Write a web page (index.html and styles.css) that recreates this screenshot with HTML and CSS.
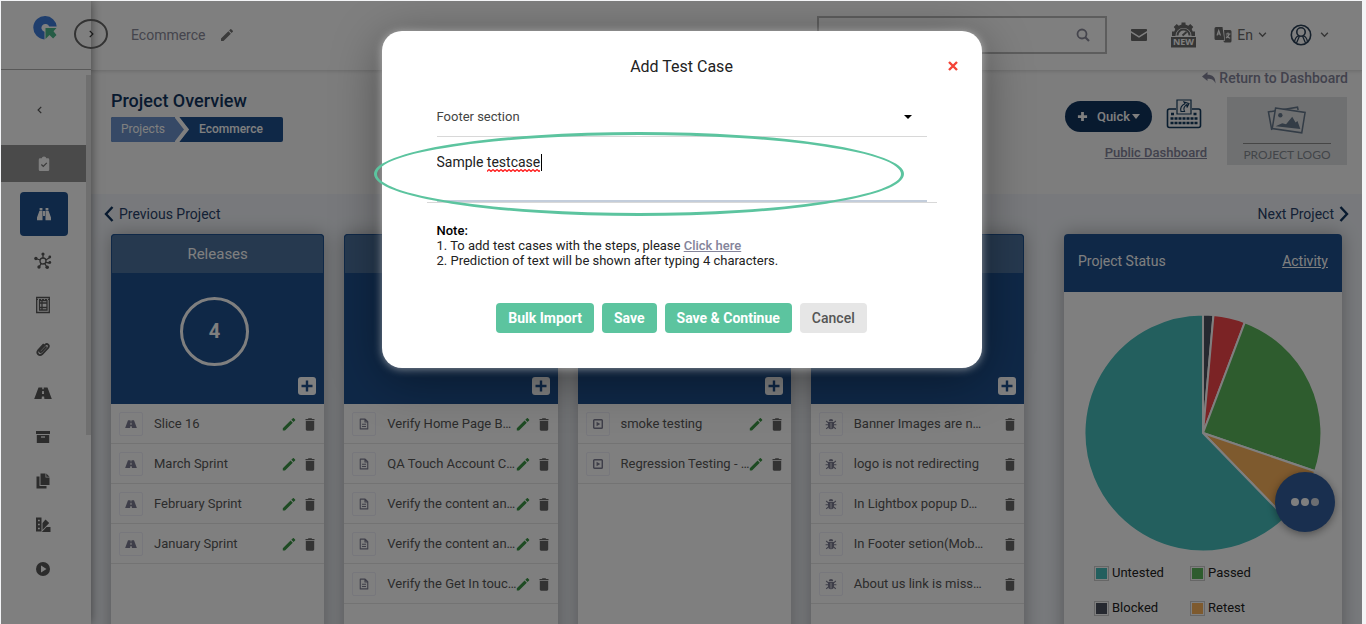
FILE: index.html
```html
<!DOCTYPE html>
<html lang="en">
<head>
    <meta charset="UTF-8">
    <meta name="viewport" content="width=device-width, initial-scale=1">
    <title>Project Overview</title>
    <link rel="stylesheet" href="styles.css">
</head>
<body>
    <!-- Icon set -->
    <svg class="icon-set" aria-hidden="true">
        <symbol id="i-left" viewBox="0 0 16 16"><path d="M10 3L5 8l5 5" fill="none" stroke="currentColor" stroke-width="2"/></symbol>
        <symbol id="i-right" viewBox="0 0 16 16"><path d="M6 3l5 5-5 5" fill="none" stroke="currentColor" stroke-width="2"/></symbol>
        <symbol id="i-down" viewBox="0 0 16 16"><path d="M2 5l6 6 6-6" fill="none" stroke="currentColor" stroke-width="2.5"/></symbol>
        <symbol id="i-edit" viewBox="0 0 24 24"><path d="M3 17.25V21h3.75L17.81 9.94l-3.75-3.75L3 17.25zM20.71 7.04a1 1 0 0 0 0-1.41l-2.34-2.34a1 1 0 0 0-1.41 0l-1.83 1.83 3.75 3.75 1.83-1.83z" fill="currentColor"/></symbol>
        <symbol id="i-pencil" viewBox="0 0 14 14"><path d="M.8 11.200V13.500H3L10.800 5.700 8.600 3.500zM9.300 2.800l2.200 2.200 1.600-1.600c.3-.3.3-.6 0-.9L11.800 1.200c-.3-.3-.6-.3-.9 0z" fill="currentColor"/></symbol>
        <symbol id="i-trash" viewBox="0 0 12 14"><path d="M1.500 2h2.300L4.500 1.200h3l.7.8h2.300V3.300h-9zM1.800 4.100h8.400v8.200c0 .9-.4 1.400-1.300 1.400H3.100c-.9 0-1.300-.5-1.300-1.400z" fill="currentColor"/></symbol>
        <symbol id="i-road" viewBox="0 0 18 14"><path d="M4.500 1.500h3.800v1.800h1.400V1.500h3.800L17.800 13h-7.400l-.3-2.500H7.900L7.600 13H.2zM8.200 5l-.2 3h2l-.2-3z" fill="currentColor" fill-rule="evenodd"/></symbol>
        <symbol id="i-doc" viewBox="0 0 14 16"><path d="M2 1.500h6.500L12 5v9.500H2zM8.300 1.700V5.300H12M4.300 8.300h5.400M4.300 11.300h5.400" fill="none" stroke="currentColor" stroke-width="1.500" stroke-linejoin="round"/></symbol>
        <symbol id="i-run" viewBox="0 0 14 14"><rect x="2" y="2" width="10" height="10" rx="1" fill="none" stroke="currentColor" stroke-width="1.700"/><path d="M5.300 4.300v5.400L9.700 7z" fill="currentColor"/></symbol>
        <symbol id="i-bug" viewBox="0 0 16 16"><path d="M5 4.300a3 3 0 0 1 6 0zM4 5.200h8V11a4 4 0 0 1-8 0z" fill="currentColor"/><path d="M1.500 4l3 2.500M14.500 4l-3 2.500M.8 9h3.500M15.200 9h-3.500M1.500 14.500L4.500 12M14.500 14.500l-3-2.500" stroke="currentColor" stroke-width="1.400"/><path d="M8 6.500V14" stroke="#fff" stroke-width="1"/></symbol>
        <symbol id="i-add" viewBox="0 0 18 18"><rect width="18" height="18" rx="3" fill="#fff"/><path d="M9 3.500v11M3.500 9h11" stroke="#1e508e" stroke-width="2.400"/></symbol>
    </svg>

    <div class="app">
        <nav class="sidebar">
            <div class="brand">
                <svg class="brand-logo" viewBox="0 0 26 26"><path d="M12.500 1a11.700 11.700 0 0 1 11.200 10.500h-7.500a4 4 0 1 0-4.700 5.300V24.400A11.700 11.700 0 0 1 12.500 1z" fill="#3f7ddb"/><path d="M12.500 13h11l-3 3.200 3 3.800-3.400 3.400-3.600-3.500-4 4.100z" fill="#4cb88c"/></svg>
            </div>
            <a class="side-back" href="#" aria-label="Back"><svg><use href="#i-left"/></svg></a>
            <a class="side-head" href="#" aria-label="Project">
                <svg viewBox="0 0 16 18"><path d="M3.500 2.500h2a2.500 2 0 0 1 5 0h2A1.500 1.500 0 0 1 14 4v11.500a1.500 1.500 0 0 1-1.500 1.500h-9A1.500 1.500 0 0 1 2 15.500V4a1.500 1.500 0 0 1 1.500-1.500z" fill="#fff"/><path d="M5 9.500l2.200 2.200 4-4" fill="none" stroke="#777" stroke-width="1.500"/></svg>
            </a>
            <a class="side-active" href="#" aria-label="Overview">
                <svg viewBox="0 0 18 16"><path d="M4 1h3.200v3H4zM10.800 1H14v3h-3.200zM3.700 4.700h3.600V15H1v-3zM10.700 4.700h3.600L17 12v3h-6.300zM7.900 4.700h2.200v5.500H7.900z" fill="#fff"/></svg>
            </a>
            <a class="side-link" href="#" aria-label="Modules"><svg viewBox="0 0 18 18"><g fill="none" stroke="currentColor" stroke-width="1.300"><circle cx="9" cy="9" r="3"/><path d="M9 6V2M6.300 8L1.500 6.500M11.800 8l4-2.500M11.800 10.300l3.500.7M7.300 11.500L5 15M10.800 11.500l2 3.500"/></g><g fill="currentColor"><circle cx="9" cy="2" r="1.600"/><circle cx="1.900" cy="6.500" r="1.700"/><circle cx="15.800" cy="5" r="1.400"/><circle cx="15.800" cy="10.500" r="1.400"/><circle cx="5" cy="15" r="1.700"/><circle cx="13.200" cy="15.300" r="1.800"/></g></svg></a>
            <a class="side-link" href="#" aria-label="Plans"><svg viewBox="0 0 18 18"><path d="M2.700 1.500h12.600v15H2.700zM5.500 4.500h7.500v9.500H5.500zM8 4.500v9.500M5.500 7H13M5.500 11.500H13" fill="none" stroke="currentColor" stroke-width="1.300"/><path d="M2 3.500h14" stroke="currentColor" stroke-width="1" stroke-dasharray="2 1"/></svg></a>
            <a class="side-link" href="#" aria-label="Attachments"><svg viewBox="0 0 18 18"><path d="M12.500 6.500l-4.800 5.200c-1.200 1.200-2.700-.3-1.600-1.500l5-5.300c2.200-2.100 5 .6 3 2.900l-5.800 6.200c-3 2.800-6.600-.8-4-3.900L9.800 4" fill="none" stroke="currentColor" stroke-width="1.800"/></svg></a>
            <a class="side-link" href="#" aria-label="Releases"><svg><use href="#i-road"/></svg></a>
            <a class="side-link" href="#" aria-label="Archive"><svg viewBox="0 0 18 18"><path d="M2 3h14v3H2zM2.800 7h12.400v8H2.800z" fill="currentColor"/><path d="M7 9h4" stroke="#fff" stroke-width="1.300"/></svg></a>
            <a class="side-link" href="#" aria-label="Documents"><svg viewBox="0 0 18 18"><path d="M6.500 1.500h5v4h4V13h-9zM12.300 1.500l3.200 3.200h-3.200zM2.500 4.500H5.500v9.500H12.500v2.500h-10z" fill="currentColor"/></svg></a>
            <a class="side-link" href="#" aria-label="Reports"><svg viewBox="0 0 18 18"><path d="M2 1.500h5.500v14H2zM8.500 7l3-3.500L15.200 7 8.500 14zM12.500 11h4v5H7.800z" fill="currentColor"/><path d="M4 4.500h1.800M4 8.500h1.800M4 12.500h1.800" stroke="#fff" stroke-width="1.500"/></svg></a>
            <a class="side-link" href="#" aria-label="Runs"><svg viewBox="0 0 18 18"><circle cx="9" cy="9" r="7" fill="currentColor"/><path d="M7 5.500v7L12.500 9z" fill="#fff"/></svg></a>
        </nav>
        <button class="side-toggle" type="button" aria-label="Expand menu"><svg><use href="#i-right"/></svg></button>

        <main class="main">
            <header class="topbar">
                <span class="project-name">Ecommerce</span>
                <svg class="edit-project"><use href="#i-edit"/></svg>
                <div class="search">
                    <input type="text" aria-label="Search">
                    <svg viewBox="0 0 16 16"><circle cx="7" cy="7" r="4.500" fill="none" stroke="currentColor" stroke-width="1.800"/><path d="M10 10l4 4" stroke="currentColor" stroke-width="2.200"/></svg>
                </div>
                <svg class="mail" viewBox="0 0 16 14"><path d="M0 3V1.500Q0 1 1 1h14q1 0 1 .5V3L8 8zM0 4.800l8 5 8-5V12q0 1-1 1H1q-1 0-1-1z" fill="currentColor"/></svg>
                <svg class="whats-new" viewBox="0 0 25 26">
                    <path d="M10.500 2.500V.5h4v2l2.800 1.200 2-1.700 3 3-1.600 2 1 2.500H24V14h-3.500a8 8 0 0 0-16 0H1V9.500h2.300l1-2.500-1.600-2 3-3 2 1.700z" fill="currentColor"/>
                    <path d="M6.500 13.500a6 6 0 0 1 12 0M11.500 13.500l4-3.500" fill="none" stroke="currentColor" stroke-width="2"/>
                    <path d="M0 15h25v10.500H0z" fill="currentColor"/>
                    <text x="12.500" y="23.300" text-anchor="middle" class="new-text">NEW</text>
                </svg>
                <button class="lang" type="button">
                    <svg class="translate" viewBox="0 0 18 18"><path d="M2 1h6.500l1.800 13H2Q.5 14 .5 12.500v-10Q.5 1 2 1zM10 4h6q1.500 0 1.500 1.500V15q0 1.500-1.500 1.500h-5.500l-1.500-1.800h2z" fill="currentColor"/><path d="M3 9.500l1.700-5 1.800 5M3.500 8h2.500M11.800 8h4.700M14 6.500V8M15.300 8c-.5 2-1.500 3-3.300 4M12.500 9.500c.8 1.500 2 2.300 3.700 2.800" fill="none" stroke="#fff" stroke-width="1.100"/></svg>
                    En
                    <svg class="caret"><use href="#i-down"/></svg>
                </button>
                <button class="account" type="button" aria-label="Account">
                    <svg class="avatar" viewBox="0 0 22 22"><g fill="none" stroke="currentColor" stroke-width="1.600"><circle cx="11" cy="11" r="9.700"/><circle cx="11" cy="8" r="4.200"/><path d="M4.500 18c.3-3.500 2-5.500 4.500-6.500M17.500 18c-.3-3.500-2-5.500-4.500-6.500M6.500 19l3-7M15.500 19l-3-7" stroke-width="1.300"/></g></svg>
                    <svg class="caret"><use href="#i-down"/></svg>
                </button>
            </header>

            <section class="overview">
                <div class="heading">
                    <h1>Project Overview</h1>
                    <div class="crumbs">
                        <a class="crumb" href="#">Projects</a>
                        <svg viewBox="0 0 18 25"><path d="M0 0h4l10 12.500L4 25H0z" fill="#6c93cc"/><path d="M1 -1l10.500 13.500L1 26" fill="none" stroke="#fff" stroke-width="4"/></svg>
                        <span class="crumb-now">Ecommerce</span>
                    </div>
                </div>
                <div class="tools">
                    <a class="return" href="#"><svg viewBox="0 0 14 12"><path d="M0 4.500L5.500 0v2.800C10.500 2.800 13.500 5 13.500 11.500 12 8 10 6.700 5.500 6.700V9z" fill="currentColor"/></svg>Return to Dashboard</a>
                    <div class="tools-row">
                        <div class="actions">
                            <div class="actions-row">
                                <button class="quick" type="button">
                                    <svg viewBox="0 0 12 12"><path d="M6 1v10M1 6h10" stroke="#fff" stroke-width="3"/></svg>Quick<span class="tri"></span>
                                </button>
                                <svg class="keyboard" viewBox="0 0 36 30"><g fill="none" stroke="#123a5e" stroke-width="1.600"><path d="M10 10H3.500Q1.500 10 1.500 12v14.500q0 2 2 2h29q2 0 2-2V12q0-2-2-2H26"/><path d="M11 1h14v14H11z" stroke-width="1.200"/><path d="M15 12.500h3.500c-1.500-3-.8-5 2.500-7V8.500l2-4-5-1.500 1 1.700c-4 1.800-5 4.500-4 7.800z" stroke-width="1.100"/></g><path d="M5 15h3.500M27.500 15H31M4.500 19.500h27M4.500 24h27" stroke="#123a5e" stroke-width="2.600" stroke-dasharray="3 1"/></svg>
                            </div>
                            <a class="public" href="#">Public Dashboard</a>
                        </div>
                        <div class="logo-box">
                            <svg viewBox="0 0 42 30"><g fill="none" stroke="#66788c" stroke-width="1.600"><path d="M5 25.500L1.500 6.500 32 1.500l.7 3"/><path d="M9 2.500l31 4.500-3.500 21.500L5.500 24z" fill="#dfe1e3"/></g><circle cx="14" cy="10" r="2.300" fill="#66788c"/><path d="M9 21.500l7-3 4 1 6.500-8 3.500 6 2-1.500 3 8.500z" fill="#66788c"/></svg>
                            <span>PROJECT LOGO</span>
                        </div>
                    </div>
                </div>
            </section>

            <div class="pager">
                <a href="#"><svg viewBox="0 0 10 16"><path d="M8.500 1L2 8l6.500 7" fill="none" stroke="currentColor" stroke-width="2.400"/></svg>Previous Project</a>
                <a href="#">Next Project<svg viewBox="0 0 10 16"><path d="M1.500 1L8 8l-6.500 7" fill="none" stroke="currentColor" stroke-width="2.400"/></svg></a>
            </div>

            <div class="board">
                <div class="cards">
                    <section class="card">
                        <div class="card-head">
                            <h2>Releases</h2>
                            <span class="count">4</span>
                            <button class="add" type="button" aria-label="Add release"><svg><use href="#i-add"/></svg></button>
                        </div>
                        <ul>
                            <li><span class="tag"><svg><use href="#i-road"/></svg></span><span class="name">Slice 16</span><svg class="pencil"><use href="#i-pencil"/></svg><svg class="trash"><use href="#i-trash"/></svg></li>
                            <li><span class="tag"><svg><use href="#i-road"/></svg></span><span class="name">March Sprint</span><svg class="pencil"><use href="#i-pencil"/></svg><svg class="trash"><use href="#i-trash"/></svg></li>
                            <li><span class="tag"><svg><use href="#i-road"/></svg></span><span class="name">February Sprint</span><svg class="pencil"><use href="#i-pencil"/></svg><svg class="trash"><use href="#i-trash"/></svg></li>
                            <li><span class="tag"><svg><use href="#i-road"/></svg></span><span class="name">January Sprint</span><svg class="pencil"><use href="#i-pencil"/></svg><svg class="trash"><use href="#i-trash"/></svg></li>
                        </ul>
                    </section>
                    <section class="card">
                        <div class="card-head">
                            <h2></h2>
                            <button class="add" type="button" aria-label="Add test case"><svg><use href="#i-add"/></svg></button>
                        </div>
                        <ul>
                            <li><span class="tag"><svg><use href="#i-doc"/></svg></span><span class="name">Verify Home Page B…</span><svg class="pencil"><use href="#i-pencil"/></svg><svg class="trash"><use href="#i-trash"/></svg></li>
                            <li><span class="tag"><svg><use href="#i-doc"/></svg></span><span class="name">QA Touch Account C…</span><svg class="pencil"><use href="#i-pencil"/></svg><svg class="trash"><use href="#i-trash"/></svg></li>
                            <li><span class="tag"><svg><use href="#i-doc"/></svg></span><span class="name">Verify the content an…</span><svg class="pencil"><use href="#i-pencil"/></svg><svg class="trash"><use href="#i-trash"/></svg></li>
                            <li><span class="tag"><svg><use href="#i-doc"/></svg></span><span class="name">Verify the content an…</span><svg class="pencil"><use href="#i-pencil"/></svg><svg class="trash"><use href="#i-trash"/></svg></li>
                            <li><span class="tag"><svg><use href="#i-doc"/></svg></span><span class="name">Verify the Get In touc…</span><svg class="pencil"><use href="#i-pencil"/></svg><svg class="trash"><use href="#i-trash"/></svg></li>
                        </ul>
                    </section>
                    <section class="card">
                        <div class="card-head">
                            <h2></h2>
                            <button class="add" type="button" aria-label="Add test run"><svg><use href="#i-add"/></svg></button>
                        </div>
                        <ul>
                            <li><span class="tag"><svg><use href="#i-run"/></svg></span><span class="name">smoke testing</span><svg class="pencil"><use href="#i-pencil"/></svg><svg class="trash"><use href="#i-trash"/></svg></li>
                            <li><span class="tag"><svg><use href="#i-run"/></svg></span><span class="name">Regression Testing - …</span><svg class="pencil"><use href="#i-pencil"/></svg><svg class="trash"><use href="#i-trash"/></svg></li>
                        </ul>
                    </section>
                    <section class="card">
                        <div class="card-head">
                            <h2></h2>
                            <button class="add" type="button" aria-label="Add issue"><svg><use href="#i-add"/></svg></button>
                        </div>
                        <ul>
                            <li><span class="tag"><svg><use href="#i-bug"/></svg></span><span class="name">Banner Images are n…</span><svg class="trash"><use href="#i-trash"/></svg></li>
                            <li><span class="tag"><svg><use href="#i-bug"/></svg></span><span class="name">logo is not redirecting</span><svg class="trash"><use href="#i-trash"/></svg></li>
                            <li><span class="tag"><svg><use href="#i-bug"/></svg></span><span class="name">In Lightbox popup D…</span><svg class="trash"><use href="#i-trash"/></svg></li>
                            <li><span class="tag"><svg><use href="#i-bug"/></svg></span><span class="name">In Footer setion(Mob…</span><svg class="trash"><use href="#i-trash"/></svg></li>
                            <li><span class="tag"><svg><use href="#i-bug"/></svg></span><span class="name">About us link is miss…</span><svg class="trash"><use href="#i-trash"/></svg></li>
                        </ul>
                    </section>
                </div>

                <section class="card status">
                    <div class="status-head">
                        <span>Project Status</span>
                        <a href="#">Activity</a>
                    </div>
                    <svg class="pie" viewBox="0 0 240 240">
                        <g stroke="#fff" stroke-width="2">
                            <path d="M120 120V2.500A117.500 117.500 0 0 1 130.400 3z" fill="#4d5360"/>
                            <path d="M120 120L130.400 3A117.500 117.500 0 0 1 161.500 10.100z" fill="#f7464a"/>
                            <path d="M120 120L161.500 10.100A117.500 117.500 0 0 1 231.200 157.900z" fill="#5cb85c"/>
                            <path d="M120 120L231.200 157.900A117.500 117.500 0 0 1 201.900 204.200z" fill="#fdb45c"/>
                            <path d="M120 120L201.900 204.200A117.500 117.500 0 1 1 120 2.500z" fill="#46bfbd"/>
                        </g>
                    </svg>
                    <div class="legend">
                        <span><i class="untested"></i>Untested</span>
                        <span><i class="passed"></i>Passed</span>
                        <span><i class="blocked"></i>Blocked</span>
                        <span><i class="retest"></i>Retest</span>
                    </div>
                </section>
            </div>
        </main>

        <button class="chat" type="button" aria-label="Chat"><i></i><i></i><i></i></button>

        <!-- Add test case popup -->
        <div class="backdrop">
            <form class="modal">
                <button class="close" type="button" aria-label="Close"><svg viewBox="0 0 10 10"><path d="M1 1l8 8M9 1L1 9" stroke="#f44336" stroke-width="2.400"/></svg></button>
                <h3>Add Test Case</h3>
                <select class="module" aria-label="Section">
                    <option>Footer section</option>
                </select>
                <div class="case">
                    <input type="text" aria-label="Test case" value="Sample testcase">
                    <svg class="spelling" viewBox="0 0 53 3"><path d="M0 2.500l2-2 2 2 2-2 2 2 2-2 2 2 2-2 2 2 2-2 2 2 2-2 2 2 2-2 2 2 2-2 2 2 2-2 2 2 2-2 2 2 2-2 2 2 2-2 2 2 2-2 2 2 1-1" fill="none" stroke="#f22" stroke-width="1.300"/></svg>
                    <span class="cursor"></span>
                </div>
                <div class="note">
                    <strong>Note:</strong>
                    <p>1. To add test cases with the steps, please <a href="#">Click here</a></p>
                    <p>2. Prediction of text will be shown after typing 4 characters.</p>
                </div>
                <div class="buttons">
                    <button type="button">Bulk Import</button>
                    <button type="button">Save</button>
                    <button type="button">Save &amp; Continue</button>
                    <button class="cancel" type="button">Cancel</button>
                </div>
                <span class="highlight"></span>
            </form>
        </div>
    </div>
</body>
</html>
```
FILE: styles.css
```css
* {
    box-sizing: border-box;
}
body {
    margin: 0;
    padding: 1px 4px 0 1px;
    height: 100vh;
    overflow: hidden;
    background-color: #f3f4f6;
    font-family: Roboto, "Liberation Sans", sans-serif;
    font-size: 13px;
    color: #333;
}
h1, h2, h3, p, ul {
    margin: 0;
    padding: 0;
}
a {
    color: inherit;
    text-decoration: none;
}
button {
    border: 0;
    background: none;
    padding: 0;
    font: inherit;
    color: inherit;
}
svg {
    display: block;
    flex: none;
}
.icon-set {
    position: absolute;
    width: 0;
    height: 0;
}
.app {
    position: relative;
    display: flex;
    height: 100%;
    overflow: hidden;
    background-color: #fafafa;
}

/* Sidebar */
.sidebar {
    position: relative;
    z-index: 2;
    width: 90px;
    flex: none;
    display: flex;
    flex-direction: column;
    background-color: #fff;
    box-shadow: 0 0 10px rgba(0, 0, 0, 0.5);
    color: #585858;
}
.sidebar::after {
    content: "";
    position: absolute;
    top: 74px;
    right: 0;
    width: 5px;
    height: 360px;
    background-color: #dedede;
}
.brand {
    height: 69px;
    padding: 14px 32px;
    border-bottom: 1px solid #b0b0b0;
}
.brand-logo {
    width: 26px;
    height: 26px;
}
.side-back {
    height: 75px;
    margin-right: 13px;
    padding-top: 4px;
    display: flex;
    align-items: center;
    justify-content: center;
}
.side-back svg {
    width: 10px;
    height: 10px;
}
.side-head {
    height: 37px;
    margin-right: 5px;
    display: flex;
    align-items: center;
    justify-content: center;
    background-color: #949494;
}
.side-head svg {
    width: 14px;
    height: 16px;
}
.side-active {
    width: 48px;
    height: 44px;
    margin: 10px 19px 3px;
    flex: none;
    display: flex;
    align-items: center;
    justify-content: center;
    border-radius: 4px;
    background-color: #1e508e;
}
.side-active svg {
    width: 16px;
    height: 14px;
}
.side-link {
    height: 44px;
    flex: none;
    margin-right: 6px;
    display: flex;
    align-items: center;
    justify-content: center;
}
.side-link svg {
    width: 18px;
    height: 18px;
}
.side-toggle {
    position: absolute;
    z-index: 3;
    top: 18px;
    left: 73px;
    width: 34px;
    height: 30px;
    display: flex;
    align-items: center;
    justify-content: center;
    border: 2px solid #666;
    border-radius: 50%;
}
.side-toggle svg {
    width: 10px;
    height: 10px;
}

/* Top bar */
.main {
    flex: 1;
    min-width: 0;
    display: flex;
    flex-direction: column;
}
.topbar {
    height: 70px;
    flex: none;
    display: flex;
    align-items: center;
    padding: 0 33px 2px 40px;
    background-color: #fff;
    border-bottom: 1px solid #e2e2e2;
    box-shadow: 0 1px 3px rgba(0, 0, 0, 0.1);
    color: #6c6c6c;
}
.project-name {
    font-size: 14px;
    color: #8a8a9a;
}
.edit-project {
    width: 16px;
    height: 16px;
    margin-left: 14px;
    color: #777;
}
.search {
    width: 290px;
    height: 38px;
    margin-left: auto;
    display: flex;
    align-items: center;
    padding-right: 14px;
    border: 2px solid #bbb;
    color: #8a8a9a;
}
.search input {
    flex: 1;
    min-width: 0;
    border: 0;
    outline: 0;
    background: none;
}
.search svg {
    width: 16px;
    height: 16px;
}
.mail {
    width: 16px;
    height: 14px;
    margin-left: 24px;
}
.whats-new {
    width: 25px;
    height: 26px;
    margin-left: 24px;
}
.new-text {
    font-family: "Open Sans", sans-serif;
    font-size: 9px;
    font-weight: bold;
    fill: #fff;
}
.lang {
    display: flex;
    align-items: center;
    gap: 5px;
    margin-left: 18px;
    font-size: 14px;
}
.translate {
    width: 18px;
    height: 18px;
}
.caret {
    width: 9px;
    height: 9px;
}
.account {
    display: flex;
    align-items: center;
    gap: 8px;
    margin-left: 23px;
}
.avatar {
    width: 22px;
    height: 22px;
    color: #2b4057;
}

/* Overview heading */
.overview {
    height: 123px;
    flex: none;
    display: flex;
    justify-content: space-between;
    padding: 0 14px 0 20px;
}
.heading {
    padding-top: 20px;
}
.heading h1 {
    font-size: 18px;
    line-height: 20px;
    font-weight: 500;
    color: #10345f;
}
.crumbs {
    display: flex;
    width: fit-content;
    height: 25px;
    margin-top: 6px;
    font-size: 12px;
    line-height: 24px;
    border-radius: 2px;
    overflow: hidden;
    background-color: #1e508e;
    color: #fff;
}
.crumb {
    padding: 0 10px;
    background-color: #6c93cc;
}
.crumbs svg {
    width: 18px;
    height: 25px;
}
.crumb-now {
    padding: 0 20px 0 6px;
    font-weight: 500;
}
.tools {
    display: flex;
    flex-direction: column;
    align-items: flex-end;
}
.return {
    display: flex;
    align-items: center;
    gap: 3px;
    font-size: 14px;
    line-height: 14px;
    font-weight: 500;
    color: #84849a;
}
.return svg {
    width: 14px;
    height: 12px;
}
.tools-row {
    display: flex;
    gap: 20px;
    margin: 12px 1px 0 0;
}
.actions {
    text-align: right;
}
.actions-row {
    display: flex;
    gap: 14px;
    padding-right: 5px;
}
.quick {
    display: flex;
    align-items: center;
    height: 31px;
    margin-top: 4px;
    padding: 0 12px;
    border-radius: 16px;
    background-color: #10345f;
    color: #fff;
    font-weight: 500;
}
.quick svg {
    width: 11px;
    height: 11px;
    margin-right: 9px;
}
.tri {
    margin-left: 2px;
    border: 4px solid transparent;
    border-top: 5px solid #fff;
    border-bottom: 0;
}
.keyboard {
    width: 36px;
    height: 30px;
    margin-top: 2px;
}
.public {
    display: block;
    margin-top: 13px;
    font-weight: 500;
    color: #84849a;
    text-decoration: underline;
}
.logo-box {
    width: 120px;
    height: 68px;
    display: flex;
    flex-direction: column;
    align-items: center;
    padding-top: 8px;
    background-color: #dfe1e3;
    font-family: Lato, sans-serif;
    font-size: 12px;
    line-height: 21px;
    color: #858b92;
}
.logo-box svg {
    width: 40px;
    height: 30px;
}
.logo-box span {
    margin-top: 8px;
    border-top: 1px solid #8c8c8c;
}

/* Previous / next project */
.pager {
    height: 39px;
    flex: none;
    display: flex;
    justify-content: space-between;
    align-items: center;
    padding: 0 13px;
    background-color: #f0f3f8;
    font-size: 14px;
    color: #28426a;
}
.pager a {
    display: flex;
    align-items: center;
    gap: 5px;
}
.pager svg {
    width: 10px;
    height: 16px;
    color: #10345f;
}

/* Board */
.board {
    flex: 1;
    display: flex;
    gap: 40px;
    padding: 1px 20px 0;
    background-color: #f0f3f8;
}
.cards {
    flex: 1;
    display: grid;
    grid-template-columns: repeat(4, 1fr);
    gap: 20px;
}
.card {
    min-width: 0;
    height: 500px;
    border-radius: 4px;
    background-color: #fff;
    box-shadow: 0 0 18px rgba(0, 0, 0, 0.3);
}
.card-head {
    position: relative;
    height: 170px;
    border-radius: 4px 4px 0 0;
    background-color: #1e508e;
    color: #fff;
}
.card h2 {
    height: 39px;
    border: 1px solid #1e508e;
    border-bottom: 0;
    border-radius: 4px 4px 0 0;
    background-color: #4c729e;
    font-size: 15px;
    line-height: 38px;
    font-weight: 400;
    text-align: center;
}
.count {
    display: block;
    width: 69px;
    height: 69px;
    margin: 24px 0 0 69px;
    border: 3px solid #fff;
    border-radius: 50%;
    font-size: 20px;
    line-height: 63px;
    font-weight: bold;
    text-align: center;
}
.add {
    position: absolute;
    right: 8px;
    bottom: 9px;
}
.add svg {
    width: 18px;
    height: 18px;
}
.card ul {
    list-style: none;
}
.card li {
    height: 40px;
    display: flex;
    align-items: center;
    padding: 1px 8px 0;
    border-bottom: 1px solid #e6e6e6;
    color: #585858;
}
.tag {
    width: 24px;
    height: 24px;
    flex: none;
    display: flex;
    align-items: center;
    justify-content: center;
    border: 1px solid #eeeef8;
    border-radius: 2px;
    color: #7d7d92;
}
.tag svg {
    width: 12px;
    height: 12px;
}
.name {
    flex: 1;
    min-width: 0;
    margin-left: 11px;
    padding-bottom: 2px;
    white-space: nowrap;
}
.pencil {
    width: 14px;
    height: 14px;
    margin-right: 8px;
    color: #3c9646;
}
.trash {
    width: 12px;
    height: 14px;
    color: #666;
}

/* Project status */
.status {
    width: 278px;
    flex: none;
}
.status-head {
    height: 58px;
    display: flex;
    justify-content: space-between;
    padding: 0 14px;
    border-radius: 4px 4px 0 0;
    background-color: #1e508e;
    color: #fff;
    font-size: 14px;
    line-height: 54px;
}
.status-head a {
    text-decoration: underline;
}
.pie {
    width: 242px;
    height: 242px;
    margin: 20px 18px 0;
}
.legend {
    display: grid;
    grid-template-columns: 96px 96px;
    row-gap: 15px;
    margin: 9px 30px;
    color: #222;
    line-height: 20px;
}
.legend span {
    display: flex;
    align-items: center;
    gap: 3px;
}
.legend i {
    width: 15px;
    height: 15px;
    border: 1px solid #ccc;
    background-clip: content-box;
    padding: 1px;
}
.untested {
    background-color: #46bfbd;
}
.passed {
    background-color: #5cb85c;
}
.blocked {
    background-color: #4d5360;
}
.retest {
    background-color: #fdb45c;
}

.chat {
    position: absolute;
    z-index: 3;
    right: 27px;
    bottom: 92px;
    width: 60px;
    height: 60px;
    display: flex;
    align-items: center;
    justify-content: center;
    gap: 2px;
    border-radius: 50%;
    background-color: #335e9f;
    box-shadow: 0 2px 8px rgba(0, 0, 0, 0.4);
}
.chat i {
    width: 8px;
    height: 8px;
    border-radius: 50%;
    background-color: #fff;
}
.chat i:last-child {
    background-color: #d8dce4;
}

/* Popup */
.backdrop {
    position: absolute;
    z-index: 4;
    inset: 0;
    padding-top: 30px;
    background-color: rgba(0, 0, 0, 0.5);
}
.modal {
    position: relative;
    width: 600px;
    margin: 0 auto;
    padding: 26px 55px 35px;
    border-radius: 20px;
    background-color: #fff;
    box-shadow: 0 1px 8px rgba(255, 255, 255, 0.5), 0 10px 50px rgba(0, 0, 0, 0.4);
    color: #222;
}
.modal h3 {
    font-size: 16px;
    line-height: 20px;
    font-weight: 400;
    text-align: center;
}
.close {
    position: absolute;
    top: 30px;
    right: 24px;
}
.close svg {
    width: 10px;
    height: 10px;
}
.module {
    display: block;
    width: 100%;
    height: 41px;
    margin-top: 19px;
    padding: 0;
    appearance: none;
    border: 0;
    border-bottom: 1px solid #d8d8d8;
    border-radius: 0;
    background: none;
    font: inherit;
    color: #444;
}
.modal::before {
    content: "";
    position: absolute;
    top: 84px;
    right: 70px;
    border: 4px solid transparent;
    border-top-color: #000;
    border-bottom: 0;
}
.case {
    position: relative;
    margin: 0 -10px;
    padding: 0 10px;
    border-bottom: 1px solid #d8d8d8;
}
.case input {
    display: block;
    width: 100%;
    height: 65px;
    padding: 0 0 14px;
    border: 0;
    border-bottom: 2px solid #c3cddb;
    outline: 0;
    background: none;
    font: inherit;
    font-size: 14px;
    color: #222;
}
.spelling {
    position: absolute;
    top: 32px;
    left: 60px;
    width: 53px;
    height: 3px;
}
.cursor {
    position: absolute;
    top: 17px;
    left: 114px;
    width: 1px;
    height: 17px;
    background-color: #000;
}
.note {
    margin-top: 20px;
    line-height: 15px;
}
.note strong {
    font-weight: 500;
    color: #000;
}
.note a {
    font-weight: 500;
    color: #84849a;
    text-decoration: underline;
}
.buttons {
    display: flex;
    justify-content: center;
    gap: 8px;
    margin-top: 35px;
}
.buttons button {
    height: 30px;
    padding: 0 12px;
    border-radius: 4px;
    background-color: #5cc49f;
    color: #fff;
    font-size: 14px;
    line-height: 28px;
    font-weight: bold;
}
.buttons .cancel {
    background-color: #e6e6e6;
    color: #555;
    font-weight: 500;
}
.highlight {
    position: absolute;
    top: 101px;
    left: -8px;
    width: 530px;
    height: 84px;
    border: 3px solid #5cc49f;
    border-radius: 50%;
    pointer-events: none;
}
```
